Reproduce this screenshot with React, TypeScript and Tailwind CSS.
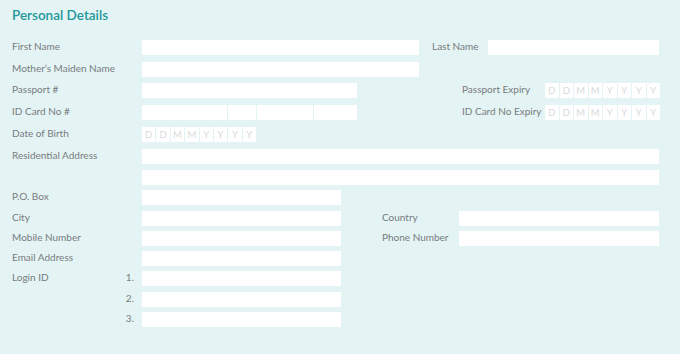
import React from "react";

const font = { fontFamily: "Lato, 'Noto Sans', sans-serif" };

function Label({ children, className = "" }: { children: React.ReactNode; className?: string }) {
  return <div className={"text-[10px] leading-[12px] text-[#777b7c] whitespace-nowrap " + className}>{children}</div>;
}

function Input({ className = "" }: { className?: string }) {
  return <div className={"h-[15px] bg-white " + className} />;
}

function DateBoxes({ className = "" }: { className?: string }) {
  const letters = ["D", "D", "M", "M", "Y", "Y", "Y", "Y"];
  return (
    <div className={"h-[15px] flex gap-px " + className}>
      {letters.map((l, i) => (
        <div key={i} className="flex-1 bg-white flex items-center justify-center text-[9.5px] leading-none text-[#d8dadb]">
          {l}
        </div>
      ))}
    </div>
  );
}

function Row({ children, className = "" }: { children: React.ReactNode; className?: string }) {
  return <div className={"flex items-start " + className}>{children}</div>;
}

export default function App() {
  return (
    <div className="w-[680px] h-[354px] bg-[#e4f4f5] pl-[12px] pt-[6px] overflow-hidden" style={font}>
      <div className="text-[13.5px] leading-[18px] font-semibold text-[#21979a]">Personal Details</div>
      <div className="flex flex-col mt-[16px]">
        <Row>
          <Label className="w-[130px]">First Name</Label>
          <Input className="w-[277px]" />
          <Label className="ml-[13px] w-[56px]">Last Name</Label>
          <Input className="w-[171px]" />
        </Row>
        <Row className="mt-[7px]">
          <Label className="w-[130px]">Mother’s Maiden Name</Label>
          <Input className="w-[277px]" />
        </Row>
        <Row className="mt-[6px]">
          <Label className="w-[130px]">Passport #</Label>
          <Input className="w-[215px]" />
          <Label className="ml-[105px] w-[83px]">Passport Expiry</Label>
          <DateBoxes className="w-[115px]" />
        </Row>
        <Row className="mt-[7px]">
          <Label className="w-[130px]">ID Card No #</Label>
          <div className="flex gap-px w-[215px]">
            <Input className="w-[85px]" />
            <Input className="w-[28px]" />
            <Input className="w-[56px]" />
            <Input className="flex-1" />
          </div>
          <Label className="ml-[105px] w-[83px]">ID Card No Expiry</Label>
          <DateBoxes className="w-[115px]" />
        </Row>
        <Row className="mt-[7px]">
          <Label className="w-[130px]">Date of Birth</Label>
          <DateBoxes className="w-[114px]" />
        </Row>
        <Row className="mt-[7px]">
          <Label className="w-[130px]">Residential Address</Label>
          <Input className="w-[517px]" />
        </Row>
        <Row className="mt-[6px]">
          <div className="w-[130px]" />
          <Input className="w-[517px]" />
        </Row>
        <Row className="mt-[5px]">
          <Label className="w-[130px]">P.O. Box</Label>
          <Input className="w-[199px]" />
        </Row>
        <Row className="mt-[6px]">
          <Label className="w-[130px]">City</Label>
          <Input className="w-[199px]" />
          <Label className="ml-[41px] w-[77px]">Country</Label>
          <Input className="w-[200px]" />
        </Row>
        <Row className="mt-[5px]">
          <Label className="w-[130px]">Mobile Number</Label>
          <Input className="w-[199px]" />
          <Label className="ml-[41px] w-[77px]">Phone Number</Label>
          <Input className="w-[200px]" />
        </Row>
        <Row className="mt-[5px]">
          <Label className="w-[130px]">Email Address</Label>
          <Input className="w-[199px]" />
        </Row>
        <Row className="mt-[5px]">
          <div className="w-[130px] flex justify-between pr-[8px]">
            <Label>Login ID</Label>
            <Label>1.</Label>
          </div>
          <Input className="w-[199px]" />
        </Row>
        <Row className="mt-[6px]">
          <div className="w-[130px] flex justify-end pr-[8px]">
            <Label>2.</Label>
          </div>
          <Input className="w-[199px]" />
        </Row>
        <Row className="mt-[5px]">
          <div className="w-[130px] flex justify-end pr-[8px]">
            <Label>3.</Label>
          </div>
          <Input className="w-[199px]" />
        </Row>
      </div>
    </div>
  );
}
